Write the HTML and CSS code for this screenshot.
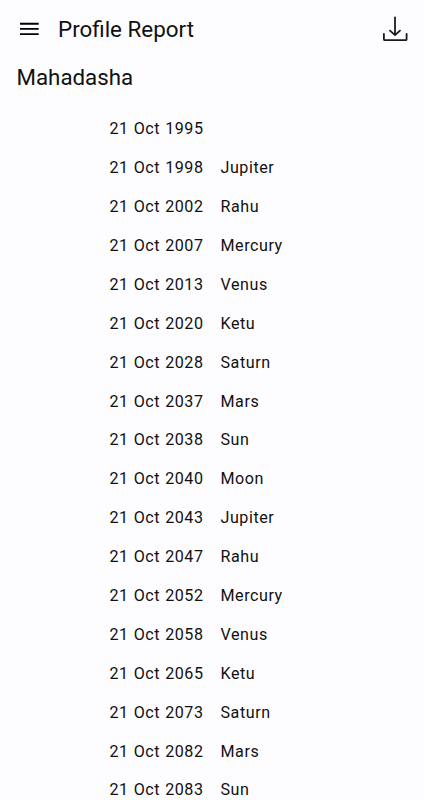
FILE: index.html
```html
<!DOCTYPE html>
<html>
    <head>
        <title>Profile Report</title>
        <meta charset="utf-8">
        <link rel="stylesheet" href="styles.css">
    </head>
    <body>
        <header class="top-bar">
            <svg class="menu-icon" viewBox="0 0 20 14">
                <path d="M0 1.700h18.700M0 6.900h18.700M0 12.100h18.700"/>
            </svg>
            <h1 class="title">Profile Report</h1>
            <svg class="download-icon" viewBox="0 0 26 28">
                <path d="M13 2.300v17.500M8 15.700l5 4.500 5-4.500M1.900 18.800v5.400a1 1 0 0 0 1 1h20.700a1 1 0 0 0 1-1V18.800"/>
            </svg>
        </header>
        <h2 class="section-title">Mahadasha</h2>
        <div class="periods">
            <span>21 Oct 1995</span><span></span>
            <span>21 Oct 1998</span><span>Jupiter</span>
            <span>21 Oct 2002</span><span>Rahu</span>
            <span>21 Oct 2007</span><span>Mercury</span>
            <span>21 Oct 2013</span><span>Venus</span>
            <span>21 Oct 2020</span><span>Ketu</span>
            <span>21 Oct 2028</span><span>Saturn</span>
            <span>21 Oct 2037</span><span>Mars</span>
            <span>21 Oct 2038</span><span>Sun</span>
            <span>21 Oct 2040</span><span>Moon</span>
            <span>21 Oct 2043</span><span>Jupiter</span>
            <span>21 Oct 2047</span><span>Rahu</span>
            <span>21 Oct 2052</span><span>Mercury</span>
            <span>21 Oct 2058</span><span>Venus</span>
            <span>21 Oct 2065</span><span>Ketu</span>
            <span>21 Oct 2073</span><span>Saturn</span>
            <span>21 Oct 2082</span><span>Mars</span>
            <span>21 Oct 2083</span><span>Sun</span>
        </div>
    </body>
</html>
```

FILE: styles.css
```css
body {
    margin: 0;
    height: 800px;
    overflow: hidden;
    background-color: #fdfdff;
    color: #111;
    font-family: Roboto, sans-serif;
}

.top-bar {
    display: flex;
    align-items: center;
    height: 58px;
    padding: 0 16px 0 20px;
}

.menu-icon {
    width: 20px;
    height: 14px;
    fill: none;
    stroke: #000;
    stroke-width: 1.9;
}

.title {
    flex: 1;
    margin: 0 0 0 18px;
    font-size: 22.4px;
    font-weight: 400;
}

.download-icon {
    width: 26px;
    height: 28px;
    fill: none;
    stroke: #1a1b1e;
    stroke-width: 1.8;
    stroke-linecap: round;
    stroke-linejoin: round;
}

.section-title {
    margin: 0 0 0 16.5px;
    height: 51px;
    font-size: 22.3px;
    font-weight: 400;
    line-height: 39px;
}

.periods {
    display: grid;
    grid-template-columns: 94px 1fr;
    grid-auto-rows: 38.9px;
    column-gap: 17px;
    padding: 0.3px 0 0 109.5px;
    font-size: 16.1px;
    line-height: 39px;
    letter-spacing: 0.55px;
    word-spacing: 0.5px;
    white-space: nowrap;
}
```
